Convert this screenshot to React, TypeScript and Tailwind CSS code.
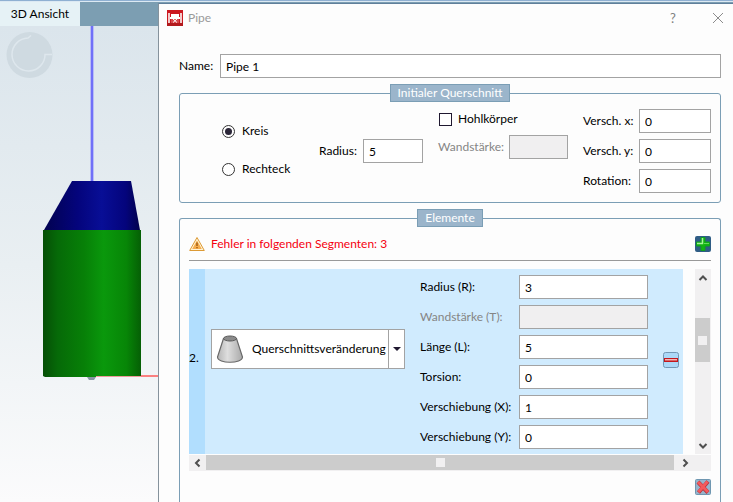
import React from 'react';

type FieldProps = {
  id: string;
  label: string;
  value?: string;
  disabled?: boolean;
  inputClass: string;
};

const Field: React.FC<FieldProps> = ({ id, label, value = '', disabled, inputClass }) => {
  return (
    <div className="flex items-center justify-between">
      <label htmlFor={id} className={disabled ? 'whitespace-nowrap text-[#858585]' : 'whitespace-nowrap'}>
        {label}
      </label>
      <input
        id={id}
        type="text"
        defaultValue={value}
        disabled={disabled}
        className={`h-6 border border-[#a3a3a3] px-[5px] outline-none ${
          disabled ? 'bg-[#f0eff0]' : 'bg-white'
        } ${inputClass}`}
      />
    </div>
  );
};

const Chevron: React.FC<{ d: string }> = ({ d }) => (
  <svg viewBox="0 0 16 16" className="h-4 w-4" fill="none" stroke="#4f4f4f" strokeWidth="2">
    <path d={d} />
  </svg>
);

const PipeLogo = () => (
  <svg viewBox="0 0 16 16" className="h-4 w-4">
    <rect width="16" height="16" fill="#cc1820" />
    <rect y="12" width="16" height="4" fill="#b31a1d" />
    <path d="M1 3h2v10H1zM13 3h2v10h-2z" fill="#f3c9c9" />
    <path d="M4 4h8v3H4zM3 7h10v2H3z" fill="#fff" />
    <path d="M4 9h8v4H4z" fill="#d8484c" />
    <path d="M6 9l4 3.500M10 9l-4 3.500" stroke="#fff" />
  </svg>
);

const Warning = () => (
  <svg viewBox="0 0 16 16" className="h-4 w-4">
    <path d="M8 1.5 15.3 14.5H.7z" fill="#fff3d6" stroke="#dc9a35" strokeLinejoin="round" />
    <path d="M8 4.5 12.8 13H3.2z" fill="#f5ad4e" />
    <path d="M7.2 6.5h1.6v3.5H7.2zM7.2 11h1.6v1.3H7.2z" fill="#a8641a" />
  </svg>
);

const Cone = () => (
  <svg viewBox="0 0 28 30" className="h-[30px] w-7">
    <defs>
      <linearGradient id="cone">
        <stop offset="0" stopColor="#b5b5b5" />
        <stop offset="0.4" stopColor="#dedede" />
        <stop offset="1" stopColor="#a9a9a9" />
      </linearGradient>
    </defs>
    <path d="M7.5 4.5 1.5 23c0 7 25 7 25 0L20.500 4.500z" fill="url(#cone)" stroke="#686868" strokeWidth="1.200" />
    <ellipse cx="14" cy="4.500" rx="6.500" ry="2.500" fill="#8b8b8b" stroke="#5a5a5a" />
  </svg>
);

const View3D = () => (
  <svg viewBox="0 0 158 476" className="block w-full">
    <defs>
      <linearGradient id="green">
        <stop offset="0" stopColor="#064f06" />
        <stop offset="0.15" stopColor="#066a08" />
        <stop offset="0.42" stopColor="#078007" />
        <stop offset="0.62" stopColor="#0a980c" />
        <stop offset="0.85" stopColor="#078607" />
        <stop offset="1" stopColor="#055f05" />
      </linearGradient>
      <linearGradient id="blue">
        <stop offset="0" stopColor="#020250" />
        <stop offset="0.35" stopColor="#04047c" />
        <stop offset="0.6" stopColor="#080e96" />
        <stop offset="0.85" stopColor="#04047c" />
        <stop offset="1" stopColor="#02024c" />
      </linearGradient>
    </defs>
    <circle cx="29.500" cy="29" r="23" fill="#cfdae1" />
    <path d="M31 9.500 28 12A16.500 16.500 0 1 0 45 28.500h7" fill="none" stroke="#dee7ed" strokeWidth="1.500" />
    <rect x="90" width="4" height="155" fill="#b9bdf5" />
    <rect x="91" width="2" height="155" fill="#7070f8" />
    <path d="M72 155h59l9 49H44z" fill="url(#blue)" />
    <path d="M43 204h98v146l-2 1H45l-2-1z" fill="url(#green)" />
    <path d="M87 351h9l-2 3h-5z" fill="#8794a3" />
    <rect x="96" y="350" width="62" height="1" fill="#ef9a9a" />
    <rect x="141" y="349" width="17" height="2" fill="#fa8080" />
  </svg>
);

const segmentFields = [
  { id: 'seg-radius', label: 'Radius (R):', value: '3' },
  { id: 'seg-wall', label: 'Wandstärke (T):', disabled: true },
  { id: 'seg-length', label: 'Länge (L):', value: '5' },
  { id: 'seg-torsion', label: 'Torsion:', value: '0' },
  { id: 'seg-x', label: 'Verschiebung (X):', value: '1' },
  { id: 'seg-y', label: 'Verschiebung (Y):', value: '0' },
];

const Legend: React.FC<{ children: React.ReactNode }> = ({ children }) => (
  <legend className="mx-auto h-[18px] border border-[#7b9eb5] bg-[#9bb5cb] px-[7px] leading-4 text-white">
    {children}
  </legend>
);

const App: React.FC = () => {
  return (
    <div className="flex h-screen flex-col overflow-hidden bg-[#7c9eb2] font-['Lato','Open_Sans',sans-serif] text-[12px] leading-4 text-black">
      <div className="h-0.5 shrink-0 border-b border-[#dce9f3] bg-[#8fb0d2]" />
      <div className="flex min-h-0 flex-1">
        <section className="flex w-[158px] shrink-0 flex-col">
          <div className="flex h-6 shrink-0">
            <button type="button" className="w-20 bg-[#e6f2f6] whitespace-nowrap">
              3D Ansicht
            </button>
          </div>
          <div className="flex-1 overflow-hidden bg-linear-to-b from-[#dbe5ec] via-[#e9eff2] to-[#fbfbfc]">
            <View3D />
          </div>
        </section>

        <main className="mt-px flex min-w-0 flex-1 flex-col border-t border-l border-[#85929c] border-t-[#5f7f9b] bg-[#fdfdfd]">
          <header className="flex h-7 shrink-0 items-center pr-[7px] pl-2">
            <PipeLogo />
            <h1 className="ml-[5px] flex-1 text-[#999999]">Pipe</h1>
            <button type="button" aria-label="Hilfe" className="w-[30px] text-[13px] text-[#808080]">
              ?
            </button>
            <button type="button" aria-label="Schließen" className="ml-[22px] flex w-4 justify-center">
              <svg viewBox="0 0 12 12" className="h-3 w-3" stroke="#8c8c8c" fill="none">
                <path d="M1 1l10 10M11 1L1 11" />
              </svg>
            </button>
          </header>

          <form className="mt-[22px] flex min-h-0 flex-1 flex-col gap-1.5 pr-3 pl-5">
            <div className="flex items-center gap-1.5">
              <label htmlFor="name" className="w-[35px]">
                Name:
              </label>
              <input
                id="name"
                type="text"
                defaultValue="Pipe 1"
                className="h-6 min-w-0 flex-1 border border-[#a3a3a3] bg-white px-[5px] outline-none"
              />
            </div>

            <fieldset className="min-w-0 rounded-[3px] border border-[#7b9eb5]">
              <Legend>Initialer Querschnitt</Legend>
              <div className="grid grid-cols-[97fr_119fr_145fr_128fr] pt-[7px] pr-[9px] pb-[9px] pl-[42px]">
                <div className="flex flex-col gap-[22px] pt-3.5">
                  <label className="flex items-center gap-[7px]">
                    <input
                      type="radio"
                      name="shape"
                      defaultChecked
                      className="h-[13px] w-[13px] appearance-none rounded-full border border-[#333333] bg-white checked:bg-[#2b2638] checked:bg-clip-content checked:p-0.5"
                    />
                    Kreis
                  </label>
                  <label className="flex items-center gap-[7px]">
                    <input
                      type="radio"
                      name="shape"
                      className="h-[13px] w-[13px] appearance-none rounded-full border border-[#333333] bg-white checked:bg-[#2b2638] checked:bg-clip-content checked:p-0.5"
                    />
                    Rechteck
                  </label>
                </div>
                <div className="pt-[30px] pr-[15px]">
                  <Field id="radius" label="Radius:" value="5" inputClass="w-[60px]" />
                </div>
                <div className="flex flex-col gap-2 pt-0.5 pr-[15px]">
                  <label className="flex items-center gap-1.5 pl-px">
                    <input
                      type="checkbox"
                      className="h-[13px] w-[13px] appearance-none border border-[#1f1830] bg-white checked:bg-[#1f1830]"
                    />
                    Hohlkörper
                  </label>
                  <Field id="wall" label="Wandstärke:" disabled inputClass="w-[59px]" />
                </div>
                <div className="flex flex-col gap-1.5">
                  <Field id="off-x" label="Versch. x:" value="0" inputClass="w-[72px]" />
                  <Field id="off-y" label="Versch. y:" value="0" inputClass="w-[72px]" />
                  <Field id="rotation" label="Rotation:" value="0" inputClass="w-[72px]" />
                </div>
              </div>
            </fieldset>

            <fieldset className="min-w-0 flex-1 rounded-t-[3px] border border-b-0 border-[#7b9eb5] px-[9px]">
              <Legend>Elemente</Legend>
              <div className="mt-[9px] flex h-4 items-center gap-1.5">
                <Warning />
                <p className="flex-1 text-[#f5000f]">Fehler in folgenden Segmenten: 3</p>
                <button type="button" aria-label="Hinzufügen">
                  <svg viewBox="0 0 16 16" className="h-4 w-4">
                    <rect width="16" height="16" rx="2" fill="#2f5d85" />
                    <path d="M6 1.500h4V6h4.500v4H10v4.500H6V10H1.500V6H6z" fill="#12b312" stroke="#0fa01f" />
                    <path d="M7.500 2v5.500H2" fill="none" stroke="#a6f59a" strokeWidth="1.500" />
                    <path d="M9 7.500h5" stroke="#5fdc58" />
                  </svg>
                </button>
              </div>
              <hr className="my-2 border-[#999999]" />

              <div className="flex">
                <div className="flex min-w-0 flex-1 bg-[#d0ebfe]">
                  <div className="flex w-4 items-center bg-[#b1defe] pb-2">2.</div>
                  <div className="relative mt-[60px] ml-1.5 h-10 w-[194px]">
                    <select
                      aria-label="Elementtyp"
                      className="h-10 w-full appearance-none border border-[#a3a3a3] bg-white pl-10 outline-none"
                    >
                      <option>Querschnittsveränderung</option>
                    </select>
                    <div className="pointer-events-none absolute inset-y-0 left-[5px] flex items-center">
                      <Cone />
                    </div>
                    <div className="pointer-events-none absolute inset-y-0 right-0 flex w-[17px] items-center justify-center border-l border-[#a3a3a3]">
                      <svg viewBox="0 0 8 4" className="h-1 w-2" fill="#1f1830">
                        <path d="M0 0h8L4 4z" />
                      </svg>
                    </div>
                  </div>
                  <div className="ml-[15px] flex flex-1 flex-col gap-1.5 pt-1.5 pb-[5px]">
                    {segmentFields.map((f) => (
                      <Field key={f.id} {...f} inputClass="w-[129px]" />
                    ))}
                  </div>
                  <button type="button" aria-label="Entfernen" className="mr-1 mb-1 ml-[15px] self-center">
                    <svg viewBox="0 0 16 16" className="h-4 w-4">
                      <rect x=".5" y=".5" width="15" height="15" rx="2" fill="#abd8f8" stroke="#7397b5" />
                      <rect x="1" y="6" width="14" height="4" fill="#c4161c" />
                      <rect x="2" y="7" width="12" height="1.500" fill="#f3b5b5" />
                    </svg>
                  </button>
                </div>
                <div className="ml-3 flex w-4 flex-col bg-[#f1f0f1]">
                  <button type="button" aria-label="Nach oben" className="h-4 shrink-0">
                    <Chevron d="M4.500 11 8 7.500 11.500 11" />
                  </button>
                  <div className="mt-[33px] mr-px flex h-11 items-center justify-center bg-[#cccccc]">
                    <div className="h-[9px] w-[9px] bg-[#f1f0f1]" />
                  </div>
                  <button type="button" aria-label="Nach unten" className="mt-auto h-4 shrink-0">
                    <Chevron d="M4.500 6 8 9.500 11.500 6" />
                  </button>
                </div>
              </div>
              <div className="mt-px flex h-4 bg-[#f1f0f1]">
                <button type="button" aria-label="Nach links" className="w-[17px]">
                  <Chevron d="M10.500 4.500 7 8l3.500 3.500" />
                </button>
                <div className="mb-px flex flex-1 items-center justify-center bg-[#cccccc]">
                  <div className="h-[9px] w-[9px] bg-[#f1f0f1]" />
                </div>
                <button type="button" aria-label="Nach rechts" className="mr-4 w-[21px] pl-1">
                  <Chevron d="M5.500 4.500 9 8l-3.500 3.500" />
                </button>
              </div>

              <div className="mt-2 flex justify-end">
                <button type="button" aria-label="Löschen">
                  <svg viewBox="0 0 16 16" className="h-4 w-4">
                    <rect x=".5" y=".5" width="15" height="15" rx="1" fill="#97b4cc" stroke="#6f97b1" />
                    <path d="M3 3l10 10.500M13 2.500 3.500 13.500" stroke="#b8323a" strokeWidth="4" />
                    <path d="M3 3l10 10M12.500 2.500 3.500 13" stroke="#f4595c" strokeWidth="3" />
                  </svg>
                </button>
              </div>
            </fieldset>
          </form>
        </main>
      </div>
    </div>
  );
};

export default App;
